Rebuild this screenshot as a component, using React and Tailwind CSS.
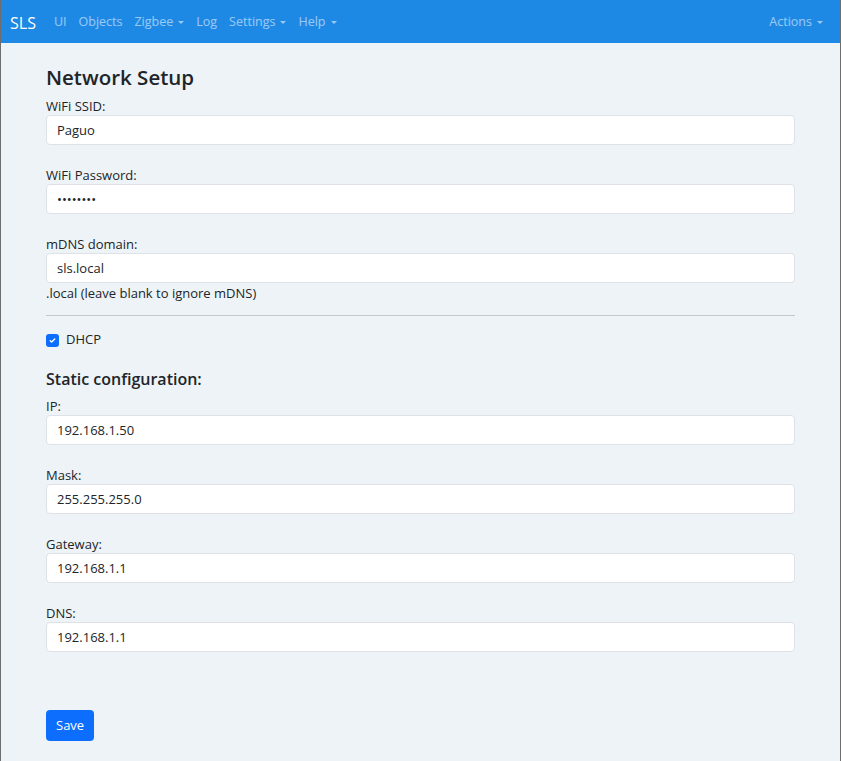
import { useState } from 'react';

const font = { fontFamily: '"Open Sans", "Noto Sans", sans-serif' };

function Caret() {
    return <span className="ml-[5px] inline-block w-0 h-0 border-x-[3px] border-x-transparent border-t-[3px] border-t-current align-middle" />;
}

function NavLink({ children, dropdown }) {
    return (
        <a href="#" className="flex items-center text-white/55 text-[12.5px]">
            {children}
            {dropdown && <Caret />}
        </a>
    );
}

function Field({ label, value, type = 'text', help, last }) {
    return (
        <div className={last ? '' : 'mb-[19px]'}>
            <label className="block text-[13px] leading-5 pt-[1px] -mb-[1px]">{label}</label>
            <input
                type={type}
                defaultValue={value}
                className="block w-full h-[30px] px-[10px] bg-white border border-[#dee2e6] rounded-[4px] text-[13px] text-[#212529] outline-none"
                style={font}
            />
            {help && <div className="text-[13px] leading-5">{help}</div>}
        </div>
    );
}

export default function App() {
    const [dhcp, setDhcp] = useState(true);

    return (
        <div className="min-h-screen bg-[#edf3f7] border-x border-[#6e6e6e] text-[#212529]" style={font}>
            {/* Navbar */}
            <nav className="h-[43px] bg-[#1e88e5] flex items-center pl-[9px] pr-[17px] pt-[2px]">
                <span className="text-white text-[16px] mr-[18px]">SLS</span>
                <div className="flex items-center gap-[12px]">
                    <NavLink>UI</NavLink>
                    <NavLink>Objects</NavLink>
                    <NavLink dropdown>Zigbee</NavLink>
                    <NavLink>Log</NavLink>
                    <NavLink dropdown>Settings</NavLink>
                    <NavLink dropdown>Help</NavLink>
                </div>
                <div className="ml-auto">
                    <NavLink dropdown>Actions</NavLink>
                </div>
            </nav>

            {/* Form */}
            <main className="px-[45px] pt-[22px] pb-5">
                <h1 className="text-[20.5px] leading-[25px] font-semibold mb-[5px]">Network Setup</h1>

                <Field label="WiFi SSID:" value="Paguo" />
                <Field label="WiFi Password:" value="12345678" type="password" />
                <div className="mb-[12px]">
                    <Field label="mDNS domain:" value="sls.local" help=".local (leave blank to ignore mDNS)" last />
                </div>

                <hr className="border-0 border-t border-[#c4c8cb]" />

                <label className="flex items-center gap-[7px] h-5 mt-[14px] text-[13px] cursor-pointer">
                    <input type="checkbox" checked={dhcp} onChange={() => setDhcp(!dhcp)} className="sr-only" />
                    <span className={`w-[13px] h-[13px] rounded-[3px] flex items-center justify-center ${dhcp ? 'bg-[#0d6efd]' : 'bg-white border border-[#adb5bd]'}`}>
                        {dhcp && (
                            <svg viewBox="0 0 20 20" className="w-[9px] h-[9px]">
                                <path d="M5 10.5l3.2 3L15 6.5" fill="none" stroke="white" strokeWidth="3" strokeLinecap="round" strokeLinejoin="round" />
                            </svg>
                        )}
                    </span>
                    DHCP
                </label>

                <h2 className="text-base leading-[19px] font-semibold mt-[20px] mb-[6px]">Static configuration:</h2>

                <Field label="IP:" value="192.168.1.50" />
                <Field label="Mask:" value="255.255.255.0" />
                <Field label="Gateway:" value="192.168.1.1" />
                <Field label="DNS:" value="192.168.1.1" last />

                <button className="block mt-[58px] h-[31px] px-[10px] bg-[#0d6efd] text-white text-[13px] rounded-[4px]">
                    Save
                </button>
            </main>
        </div>
    );
}
